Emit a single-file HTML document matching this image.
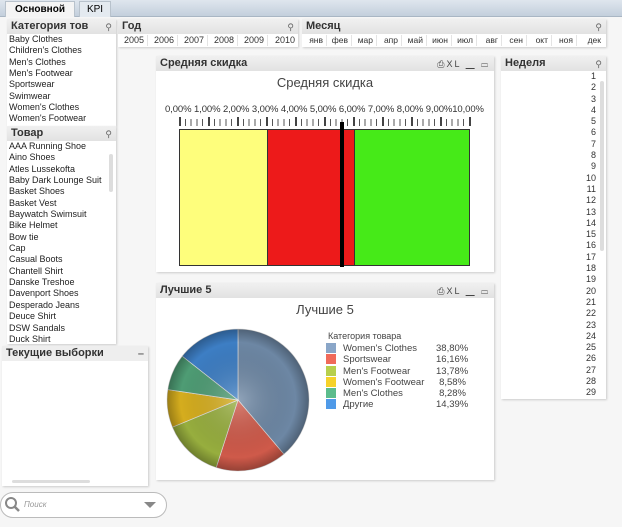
<!DOCTYPE html>
<html><head><meta charset="utf-8"><style>
*{box-sizing:border-box;margin:0;padding:0}
body{width:622px;height:527px;overflow:hidden;background:#f6f6f6;font-family:"Liberation Sans",sans-serif;position:relative}
.a{position:absolute}
.tabbar{left:0;top:0;width:622px;height:17px;background:linear-gradient(#dfe6ee,#c3cfdc);border-bottom:1px solid #a9b6c4}
.tab{top:1px;height:16px;font-size:10px;text-align:center;line-height:16px;border:1px solid #b8c2cc;border-bottom:none}
.box{background:#fff;box-shadow:1px 1px 2px #ccc}
.hd{position:absolute;left:0;right:0;top:0;height:15px;background:linear-gradient(#f0f0f0,#e2e2e2);font-size:11px;font-weight:bold;color:#333;padding-left:4px;line-height:15px}
.mag{position:absolute;right:4px;top:1px;font-size:9px;color:#666;font-weight:normal}
.ls{position:absolute;left:2px;font-size:9px;color:#222;line-height:11.35px}
.sb{position:absolute;width:4px;background:#ddd;border-radius:2px}
.row{position:absolute;font-size:9px;color:#333;display:flex;line-height:11px}
.row span{border-right:1px solid #e4e4e4;text-align:right;padding-right:3px}
.icons{position:absolute;right:4px;top:1px;font-size:9px;color:#444;font-weight:normal;letter-spacing:2px}
</style></head><body>
<div class="a tabbar"></div>
<div class="a tab" style="left:5px;width:70px;background:#f4f4f4;font-weight:bold">Основной</div>
<div class="a tab" style="left:79px;width:32px;background:#e4eaf0">KPI</div>

<!-- Категория -->
<div class="a box" style="left:7px;top:19px;width:109px;height:107px">
<div class="hd">Категория тов<span class="mag">⚲</span></div>
<div class="ls" style="top:15px">Baby Clothes<br>Children's Clothes<br>Men's Clothes<br>Men's Footwear<br>Sportswear<br>Swimwear<br>Women's Clothes<br>Women's Footwear</div>
</div>
<!-- Товар -->
<div class="a box" style="left:7px;top:126px;width:109px;height:218px">
<div class="hd">Товар<span class="mag">⚲</span></div>
<div class="ls" style="top:15px">AAA Running Shoe<br>Aino Shoes<br>Atles Lussekofta<br>Baby Dark Lounge Suit<br>Basket Shoes<br>Basket Vest<br>Baywatch Swimsuit<br>Bike Helmet<br>Bow tie<br>Cap<br>Casual Boots<br>Chantell Shirt<br>Danske Treshoe<br>Davenport Shoes<br>Desperado Jeans<br>Deuce Shirt<br>DSW Sandals<br>Duck Shirt</div>
<div class="sb" style="left:102px;top:28px;height:38px"></div>
</div>
<!-- Текущие -->
<div class="a box" style="left:2px;top:346px;width:146px;height:140px">
<div class="hd" style="background:#eee">Текущие выборки<span class="mag" style="font-weight:bold;font-size:11px">–</span></div>
<div class="a" style="left:10px;top:134px;width:78px;height:3px;background:#ddd;border-radius:2px"></div>
</div>
<!-- search -->
<div class="a" style="left:0;top:492px;width:167px;height:26px;border:1px solid #bbb;border-radius:13px;background:#fff"></div>
<svg class="a" style="left:4px;top:496px" width="18" height="18"><circle cx="7" cy="7" r="5" fill="none" stroke="#888" stroke-width="2"/><line x1="10.5" y1="10.5" x2="15" y2="15" stroke="#888" stroke-width="2.5"/></svg>
<div class="a" style="left:24px;top:500px;font-size:8px;font-style:italic;color:#999">Поиск</div>
<div class="a" style="left:144px;top:502px;width:0;height:0;border-left:6px solid transparent;border-right:6px solid transparent;border-top:6px solid #888"></div>

<!-- Год -->
<div class="a box" style="left:118px;top:19px;width:180px;height:28px">
<div class="hd">Год<span class="mag">⚲</span></div>
<div class="row" style="top:16px;left:0">
<span style="width:30px">2005</span><span style="width:30px">2006</span><span style="width:30px">2007</span><span style="width:30px">2008</span><span style="width:30px">2009</span><span style="width:30px;border:none">2010</span></div>
</div>
<!-- Месяц -->
<div class="a box" style="left:302px;top:19px;width:304px;height:28px">
<div class="hd">Месяц<span class="mag">⚲</span></div>
<div class="row" style="top:16px;left:0;font-size:8.5px">
<span style="width:25px">янв</span><span style="width:25px">фев</span><span style="width:25px">мар</span><span style="width:25px">апр</span><span style="width:25px">май</span><span style="width:25px">июн</span><span style="width:25px">июл</span><span style="width:25px">авг</span><span style="width:25px">сен</span><span style="width:25px">окт</span><span style="width:25px">ноя</span><span style="width:27px;border:none">дек</span></div>
</div>

<!-- Средняя скидка -->
<div class="a box" style="left:156px;top:56px;width:338px;height:216px">
<div class="hd">Средняя скидка<span class="icons">⎙XL ▁ ▭</span></div>
<div class="a" style="left:0;width:338px;top:19px;text-align:center;font-size:13px;color:#444">Средняя скидка</div>
<div class="a" style="left:9px;top:48px;font-size:9.5px;color:#333;letter-spacing:-0.1px;white-space:nowrap">0,00% 1,00% 2,00% 3,00% 4,00% 5,00% 6,00% 7,00% 8,00% 9,00%10,00%</div>
<div class="a" style="left:23px;top:63px;width:293px;height:7px;background:repeating-linear-gradient(90deg,#555 0 1px,transparent 1px 5.8px)"></div>
<div class="a" style="left:23px;top:61px;width:293px;height:9px;background:repeating-linear-gradient(90deg,#444 0 2px,transparent 2px 29px)"></div>
<div class="a" style="left:23px;top:73px;width:88px;height:137px;background:#fefe7c;border:1px solid #333;border-right:none"></div>
<div class="a" style="left:111px;top:73px;width:87px;height:137px;background:#ed1a1a;border-top:1px solid #333;border-bottom:1px solid #333;border-left:1px solid #333"></div>
<div class="a" style="left:198px;top:73px;width:116px;height:137px;background:#46ea18;border:1px solid #333"></div>
<div class="a" style="left:184px;top:66px;width:4px;height:145px;background:#000"></div>
</div>

<!-- Лучшие 5 -->
<div class="a box" style="left:156px;top:283px;width:338px;height:197px">
<div class="hd">Лучшие 5<span class="icons">⎙XL ▁ ▭</span></div>
<div class="a" style="left:0;width:338px;top:19px;text-align:center;font-size:13px;color:#444">Лучшие 5</div>
<div class="a" style="left:172px;top:48px;font-size:9px;color:#444">Категория товара</div>
<div class="a" style="left:170px;top:60px;font-size:9.5px;color:#444;line-height:11.3px">
<div style="display:flex"><i style="width:10px;height:10px;background:#8aa6c8;margin-right:7px"></i><span style="width:93px">Women's Clothes</span><span style="width:30px;text-align:right">38,80%</span></div>
<div style="display:flex"><i style="width:10px;height:10px;background:#f06a5a;margin-right:7px"></i><span style="width:93px">Sportswear</span><span style="width:30px;text-align:right">16,16%</span></div>
<div style="display:flex"><i style="width:10px;height:10px;background:#b7cf4c;margin-right:7px"></i><span style="width:93px">Men's Footwear</span><span style="width:30px;text-align:right">13,78%</span></div>
<div style="display:flex"><i style="width:10px;height:10px;background:#f6d22a;margin-right:7px"></i><span style="width:93px">Women's Footwear</span><span style="width:30px;text-align:right">8,58%</span></div>
<div style="display:flex"><i style="width:10px;height:10px;background:#5cbc8c;margin-right:7px"></i><span style="width:93px">Men's Clothes</span><span style="width:30px;text-align:right">8,28%</span></div>
<div style="display:flex"><i style="width:10px;height:10px;background:#4f9ae8;margin-right:7px"></i><span style="width:93px">Другие</span><span style="width:30px;text-align:right">14,39%</span></div>
</div>
</div>
<svg class="a" style="left:0;top:0" width="622" height="527">
<defs><radialGradient id="sh" cx="238" cy="400" r="72" gradientUnits="userSpaceOnUse"><stop offset="0" stop-color="#fff" stop-opacity="0.25"/><stop offset="0.8" stop-color="#000" stop-opacity="0"/><stop offset="1" stop-color="#000" stop-opacity="0.3"/></radialGradient></defs>
<g stroke="#ddd" stroke-width="0.7">
<path d="M238 400 L238 329 A71 71 0 0 1 283.9 454.2Z" fill="#6d87a4"/>
<path d="M238 400 L283.9 454.2 A71 71 0 0 1 216.2 467.6Z" fill="#cf5a4a"/>
<path d="M238 400 L216.2 467.6 A71 71 0 0 1 172.4 427.2Z" fill="#97ae3e"/>
<path d="M238 400 L172.4 427.2 A71 71 0 0 1 167.8 389.6Z" fill="#d5ad1e"/>
<path d="M238 400 L167.8 389.6 A71 71 0 0 1 182.2 356.1Z" fill="#4e9c74"/>
<path d="M238 400 L182.2 356.1 A71 71 0 0 1 238 329Z" fill="#3d7ec4"/>
</g>
<circle cx="238" cy="400" r="71" fill="url(#sh)"/>
</svg>

<!-- Неделя -->
<div class="a box" style="left:501px;top:56px;width:105px;height:343px">
<div class="hd">Неделя<span class="mag">⚲</span></div>
<div class="a" style="right:10px;top:15px;font-size:9px;color:#333;line-height:11.3px;text-align:right">1<br>2<br>3<br>4<br>5<br>6<br>7<br>8<br>9<br>10<br>11<br>12<br>13<br>14<br>15<br>16<br>17<br>18<br>19<br>20<br>21<br>22<br>23<br>24<br>25<br>26<br>27<br>28<br>29</div>
<div class="sb" style="right:2px;top:25px;height:170px"></div>
</div>
</body></html>
